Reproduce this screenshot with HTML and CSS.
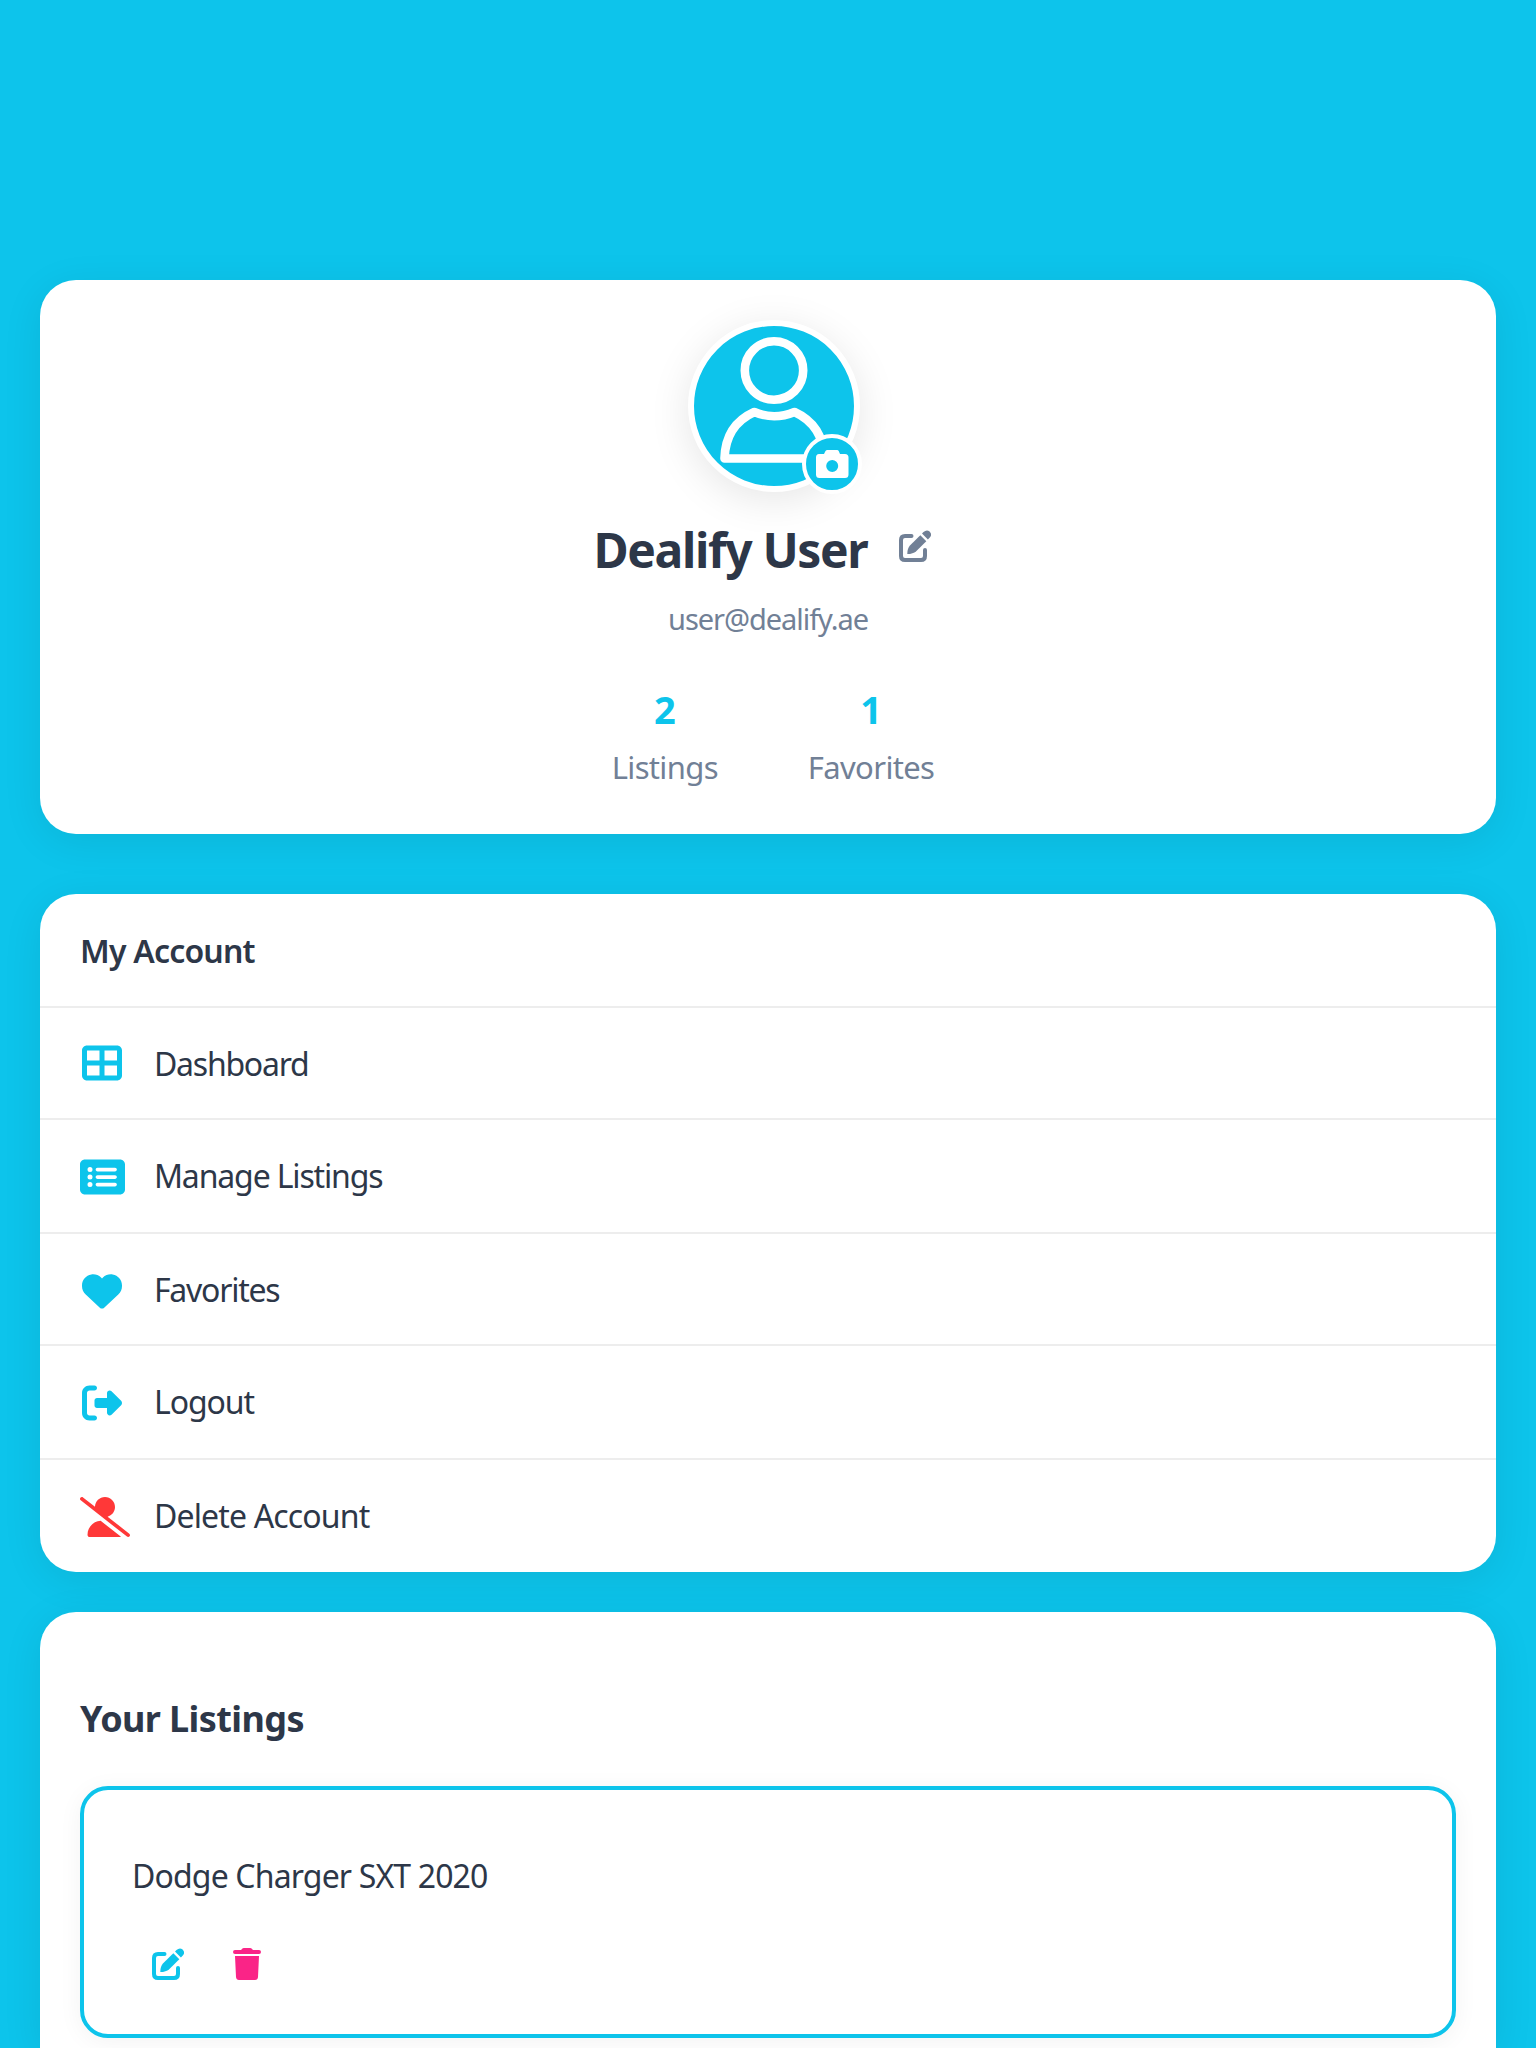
FILE: index.html
```html
<!DOCTYPE html>
<html lang="en">
<head>
<meta charset="utf-8">
<title>Profile</title>
<link rel="stylesheet" href="styles.css">
</head>
<body>
<svg width="0" height="0" class="sprite" aria-hidden="true">
  <symbol id="edit" viewBox="0 0 32 32">
    <path d="M12.500 6H6Q2 6 2 10V26Q2 30 6 30H22Q26 30 26 26V20" fill="none" stroke="currentColor" stroke-width="4" stroke-linecap="round"/>
    <path d="M21.300 5.200L27.300 11.200L17.200 21.200Q14 24 8.300 24Q8.100 18.800 11.200 15.300Z" fill="currentColor"/>
    <path d="M23 3.600L24.500 2.100Q27.500-.8 30.600 1.400Q33.600 4.600 30.800 7.500L28.900 9.500Z" fill="currentColor"/>
  </symbol>
</svg>
<main class="page">
  <section class="card profile">
    <div class="avatar">
      <svg class="person" viewBox="0 0 160 160" fill="none" stroke="#fff" stroke-width="8.6" stroke-linejoin="round">
        <circle cx="80" cy="44.500" r="29.200"/>
        <path d="M60.300 86Q80 94.500 100.500 86Q129 99 130.500 132.500H30.500Q31.500 99 60.300 86Z"/>
      </svg>
      <button class="photo" aria-label="Change photo">
        <svg viewBox="0 0 33 28"><path fill="#fff" fill-rule="evenodd" d="M3 4H8L9.500 1Q10 0 11.500 0H21Q22.200 0 22.700 1L24 4H29Q32.500 4 32.500 7.500V24.500Q32.500 28 29 28H3.500Q0 28 0 24.500V7.500Q0 4 3 4ZM16.200 10A6 6 0 1 0 16.200 22A6 6 0 1 0 16.200 10Z"/></svg>
      </button>
    </div>
    <div class="name-row"><h1 class="name">Dealify User</h1><svg class="edit-name"><use href="#edit"/></svg></div>
    <p class="email">user@dealify.ae</p>
    <div class="stats">
      <div class="stat"><strong class="count">2</strong><span class="label">Listings</span></div>
      <div class="stat"><strong class="count">1</strong><span class="label">Favorites</span></div>
    </div>
  </section>

  <nav class="card menu">
    <h2 class="menu-title">My Account</h2>
    <a class="item dashboard"><span class="slot"><svg viewBox="0 0 512 512" class="icon w512"><path fill="currentColor" d="M448 96V224H288V96H448zm0 192V416H288V288H448zM224 224H64V96H224V224zM64 288H224V416H64V288zM64 32C28.700 32 0 60.700 0 96V416c0 35.300 28.700 64 64 64H448c35.300 0 64-28.700 64-64V96c0-35.300-28.700-64-64-64H64z"/></svg></span><span class="text">Dashboard</span></a>
    <a class="item manage"><span class="slot"><svg viewBox="0 0 576 512" class="icon w576"><path fill="currentColor" d="M0 96C0 60.700 28.700 32 64 32H512c35.300 0 64 28.700 64 64V416c0 35.300-28.700 64-64 64H64c-35.300 0-64-28.700-64-64V96zM128 288a32 32 0 1 0 0-64 32 32 0 1 0 0 64zm32-128a32 32 0 1 0-64 0 32 32 0 1 0 64 0zM128 384a32 32 0 1 0 0-64 32 32 0 1 0 0 64zm96-248c-13.300 0-24 10.700-24 24s10.700 24 24 24H448c13.300 0 24-10.700 24-24s-10.700-24-24-24H224zm0 96c-13.300 0-24 10.700-24 24s10.700 24 24 24H448c13.300 0 24-10.700 24-24s-10.700-24-24-24H224zm0 96c-13.300 0-24 10.700-24 24s10.700 24 24 24H448c13.300 0 24-10.700 24-24s-10.700-24-24-24H224z"/></svg></span><span class="text">Manage Listings</span></a>
    <a class="item favorites"><span class="slot"><svg viewBox="0 0 512 512" class="icon w512"><path fill="currentColor" d="M47.600 300.400L228.300 469.100c7.500 7 17.400 10.900 27.700 10.900s20.200-3.900 27.700-10.900L464.400 300.400c30.400-28.300 47.600-68 47.600-109.500v-5.800c0-69.900-50.500-129.500-119.400-141C347 36.500 300.600 51.400 268 84L256 96 244 84c-32.600-32.600-79-47.500-124.600-39.900C50.500 55.600 0 115.200 0 185.100v5.800c0 41.500 17.200 81.200 47.600 109.500z"/></svg></span><span class="text">Favorites</span></a>
    <a class="item logout"><span class="slot"><svg viewBox="0 0 512 512" class="icon w512"><path fill="currentColor" d="M377.900 105.900L500.700 228.700c7.200 7.200 11.300 17.100 11.300 27.300s-4.100 20.100-11.300 27.300L377.900 406.100c-6.400 6.400-15 9.900-24 9.900c-18.700 0-33.900-15.200-33.900-33.900V320H192c-17.700 0-32-14.300-32-32V224c0-17.700 14.300-32 32-32H320V129.900c0-18.700 15.200-33.900 33.900-33.900c9 0 17.600 3.600 24 9.900zM160 96H96c-17.700 0-32 14.300-32 32V384c0 17.700 14.300 32 32 32h64c17.700 0 32 14.300 32 32s-14.300 32-32 32H96c-53 0-96-43-96-96V128C0 75 43 32 96 32h64c17.700 0 32 14.300 32 32s-14.300 32-32 32z"/></svg></span><span class="text">Logout</span></a>
    <a class="item delete"><span class="slot"><svg viewBox="0 0 640 512" class="icon w640 danger"><path fill="currentColor" d="M38.800 5.100C28.400-3.100 13.300-1.200 5.100 9.200S-1.200 34.700 9.200 42.900l592 464c10.400 8.200 25.500 6.300 33.700-4.100s6.300-25.500-4.100-33.700L353.300 251.600C407.900 237 448 187.200 448 128C448 57.300 390.700 0 320 0C250.200 0 193.500 55.800 192 125.200L38.800 5.100zM264.300 304.300C170.500 309.400 96 387.200 96 482.300c0 16.400 13.300 29.700 29.700 29.700H514.300c3.900 0 7.600-.7 11-2.100l-261-205.600z"/></svg></span><span class="text">Delete Account</span></a>
  </nav>

  <section class="card listings">
    <h2 class="listings-title">Your Listings</h2>
    <article class="listing">
      <p class="listing-name">Dodge Charger SXT 2020</p>
      <div class="actions">
        <svg class="act edit-listing"><use href="#edit"/></svg>
        <svg class="act remove" viewBox="0 0 28 32" fill="currentColor"><path d="M9 1Q9.500 0 11 0H17Q18.500 0 19 1L20 2H26Q28 2 28 4T26 6H2Q0 6 0 4T2 2H8ZM2 8H26L25 29Q24.800 32 22 32H6Q3.300 32 3 29Z"/></svg>
      </div>
    </article>
  </section>
</main>
</body>
</html>
```
FILE: styles.css
```css
* { box-sizing: border-box; }
body {
  margin: 0;
  background: #0dc4eb;
  color: #2d3748;
  font-family: "Noto Sans", "Open Sans", sans-serif;
  font-size: 32px;
}
h1, h2, p { margin: 0; }
.sprite { position: absolute; }
.page {
  height: 2048px;
  overflow: hidden;
  padding: 280px 40px 0;
  display: flex;
  flex-direction: column;
}
.card {
  flex: none;
  background: #fff;
  border-radius: 36px;
  box-shadow: 0 8px 40px rgba(0, 0, 0, .08);
}

.profile {
  height: 554px;
  margin-bottom: 60px;
  padding-top: 40px;
  display: flex;
  flex-direction: column;
  align-items: center;
}
.avatar {
  position: relative;
  width: 172px;
  height: 172px;
  margin-left: 12px;
  flex: none;
  border: 6px solid #fff;
  border-radius: 50%;
  background: #0dc4eb;
  box-shadow: 0 8px 40px rgba(0, 0, 0, .1);
}
.person { display: block; width: 160px; height: 160px; }
.photo {
  position: absolute;
  right: -8px;
  bottom: -8px;
  width: 60px;
  height: 60px;
  padding: 0;
  display: flex;
  align-items: center;
  justify-content: center;
  border: 4px solid #fff;
  border-radius: 50%;
  background: #0dc4eb;
}
.photo svg { width: 33px; height: 28px; }
.name-row { display: flex; height: 68px; margin-top: 24px; gap: 32px; padding-right: 11px; }
.name { font-size: 48px; line-height: 68px; font-weight: 700; letter-spacing: -1.35px; white-space: nowrap; }
.edit-name { width: 32px; height: 32px; margin-top: 14px; color: #718096; }
.email { margin-top: 15px; height: 40px; line-height: 40px; font-size: 29px; letter-spacing: -1.05px; color: #718096; }
.stats { display: flex; gap: 90px; margin-top: 45px; padding-left: 10px; }
.stat { display: flex; flex-direction: column; align-items: center; }
.count { font-size: 38px; line-height: 50px; font-weight: 700; color: #0dc4eb; }
.label { line-height: 44px; margin-top: 11px; font-size: 31px; letter-spacing: -.65px; color: #718096; }

.menu { height: 678px; margin-bottom: 40px; }
.menu-title { height: 112px; padding: 1px 0 0 40px; font-size: 32px; line-height: 112px; font-weight: 600; letter-spacing: -.8px; }
.item {
  display: flex;
  align-items: center;
  height: 114px;
  padding: 1px 0 0 40px;
  border-top: 2px solid #ededed;
  white-space: nowrap;
}
.text { margin-top: -2px; }
.dashboard { height: 112px; padding-top: 0; letter-spacing: -1.25px; }
.dashboard .text { margin-top: 1px; }
.manage { letter-spacing: -1.15px; }
.favorites { height: 112px; padding-top: 3px; letter-spacing: -1.25px; }
.logout { letter-spacing: -1.1px; }
.delete { letter-spacing: -.85px; }
.slot { width: 74px; display: flex; }
.icon { height: 40px; color: #0dc4eb; }
.w512 { width: 40px; margin-left: 2px; }
.w576 { width: 45px; }
.w640 { width: 50px; }
.icon.danger { color: #ff3838; }

.listings { height: 436px; padding: 82px 40px 0; border-radius: 36px 36px 0 0; }
.listings-title { height: 50px; line-height: 50px; font-size: 36px; font-weight: 700; letter-spacing: -.6px; white-space: nowrap; }
.listing {
  height: 252px;
  margin-top: 42px;
  padding: 63px 48px 0;
  border: 4px solid #0dc4eb;
  border-radius: 28px;
  box-shadow: 0 4px 24px rgba(0, 0, 0, .05);
}
.listing-name { height: 46px; line-height: 46px; letter-spacing: -.85px; white-space: nowrap; }
.actions { display: flex; margin-top: 49px; padding-left: 20px; gap: 49px; }
.act { display: block; height: 32px; }
.edit-listing { width: 32px; color: #0dc4eb; }
.remove { width: 28px; color: #fa2487; }
```
